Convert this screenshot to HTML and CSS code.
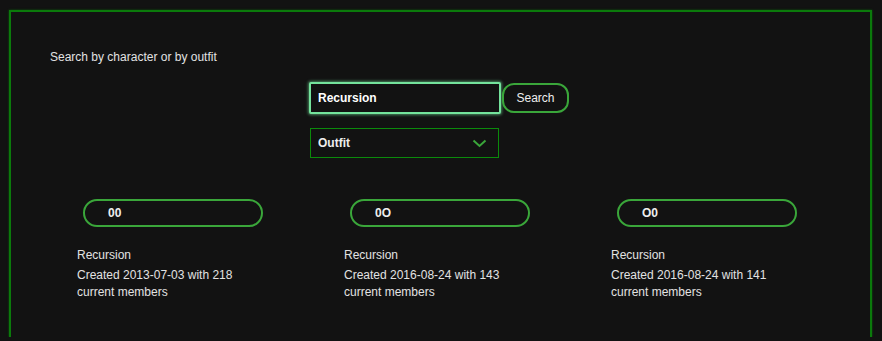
FILE: index.html
```html
<!DOCTYPE html>
<html lang="en">
<head>
<meta charset="UTF-8">
<meta name="viewport" content="width=device-width, initial-scale=1.0">
<title>Outfit Search</title>
<link rel="stylesheet" href="styles.css">
</head>
<body>
<div class="frame">
  <p class="lead">Search by character or by outfit</p>

  <div class="search">
    <div class="search-row">
      <input type="text" class="search-input focused" value="Recursion">
      <button class="search-btn">Search</button>
    </div>
    <div class="select-wrap">
      <select class="kind">
        <option>Outfit</option>
        <option>Character</option>
      </select>
      <svg class="chevron" width="15" height="9" viewBox="0 0 15 9"><path d="M1.5 1.5 L7.5 7 L13.5 1.5" fill="none" stroke="#3aa63a" stroke-width="2"/></svg>
    </div>
  </div>

  <div class="results">
    <div class="outfit">
      <div class="tag">00</div>
      <div class="name">Recursion</div>
      <div class="info">Created 2013-07-03 with 218 current members</div>
    </div>
    <div class="outfit">
      <div class="tag">0O</div>
      <div class="name">Recursion</div>
      <div class="info">Created 2016-08-24 with 143 current members</div>
    </div>
    <div class="outfit">
      <div class="tag">O0</div>
      <div class="name">Recursion</div>
      <div class="info">Created 2016-08-24 with 141 current members</div>
    </div>
  </div>
</div>
</body>
</html>
```

FILE: styles.css
```css
body { margin: 0; padding: 10px 10px 0 9px; background: #121212; color: #e2e2e2; font-family: 'Liberation Sans', Arial, sans-serif; font-size: 12px; }
.frame { border: 2px solid #0b7a0b; border-bottom: none; box-shadow: 0 0 2px #0a5a0a; padding: 38px 42px 36px 39px; }
.lead { margin: 0; line-height: 14px; }

.search { display: flex; flex-direction: column; align-items: flex-start; width: fit-content; margin: 18px auto 0; }
.search-row { display: flex; align-items: center; gap: 1px; }
.search-input { width: 192px; height: 32px; box-sizing: border-box; background: #121212; color: #fff; border: 2px solid #74e39c; border-radius: 2px; padding: 0 7px; font: bold 12px 'Liberation Sans', Arial, sans-serif; outline: none; }
.search-input.focused { box-shadow: 0 0 3px 1px rgba(116, 227, 156, 0.55); }
.search-btn { height: 30px; width: 67px; box-sizing: border-box; background: #121212; color: #eee; border: 2px solid #3aa63a; border-radius: 12px; font: 12px 'Liberation Sans', Arial, sans-serif; padding: 0; cursor: pointer; }

.select-wrap { position: relative; margin-top: 14px; margin-left: 1px; }
.kind { appearance: none; -webkit-appearance: none; width: 189px; height: 30px; box-sizing: border-box; background: #121212; color: #eee; border: 1px solid #0b8a0b; border-radius: 0; padding: 0 7px; font: bold 12px 'Liberation Sans', Arial, sans-serif; }
.chevron { position: absolute; right: 12px; top: 11px; pointer-events: none; }

.results { display: grid; grid-template-columns: repeat(3, 267px); margin: 41px 0 0 27px; }
.tag { width: 180px; height: 28px; box-sizing: border-box; margin-left: 6px; border: 2px solid #3aa63a; border-radius: 14px; padding-left: 23px; line-height: 24px; font-weight: bold; color: #eee; }
.name { margin-top: 21px; line-height: 14px; }
.info { margin-top: 5px; width: 185px; line-height: 17px; }
```
